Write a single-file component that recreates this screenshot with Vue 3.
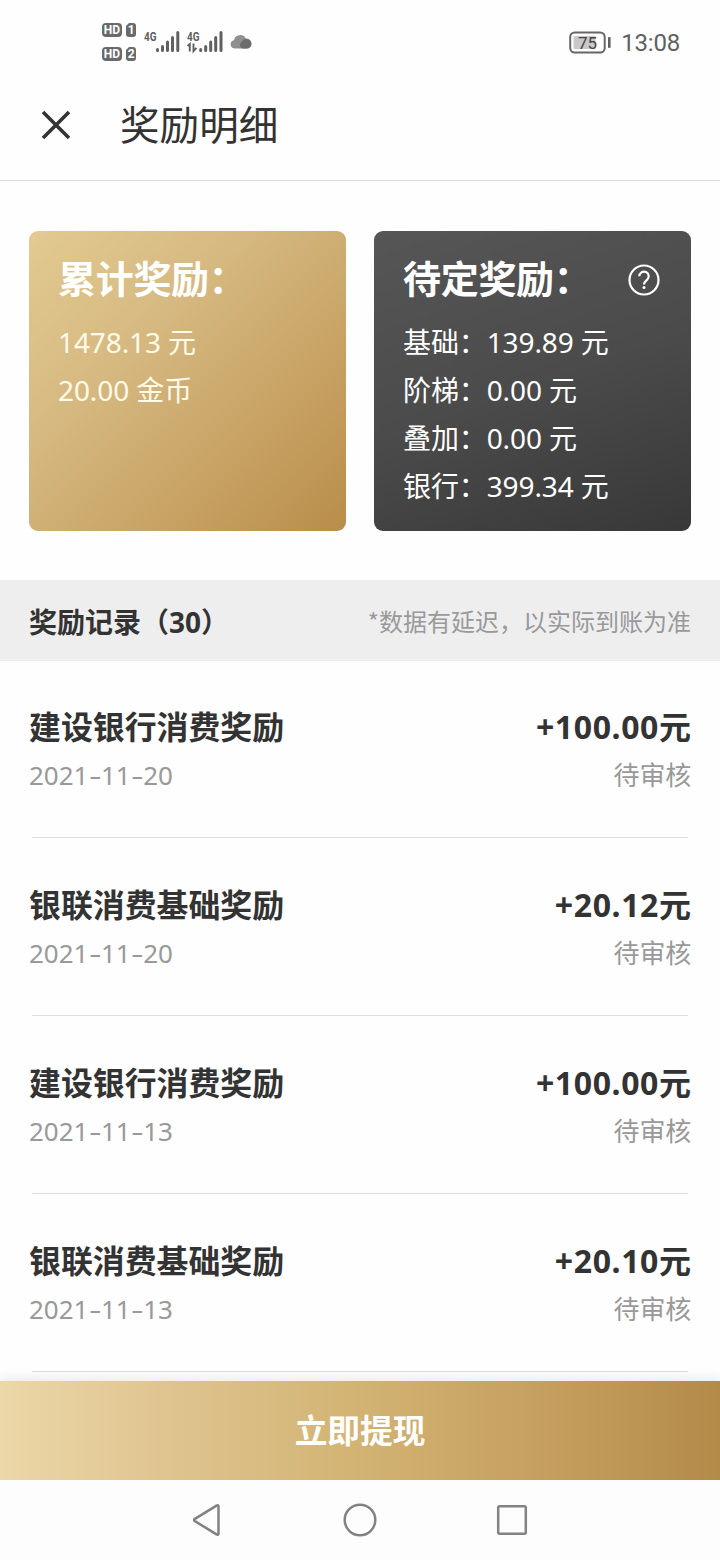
<script setup>
const pending = [
  { label: '基础', value: '139.89' },
  { label: '阶梯', value: '0.00' },
  { label: '叠加', value: '0.00' },
  { label: '银行', value: '399.34' },
]

const records = [
  { title: '建设银行消费奖励', date: '2021-11-20', amount: '+100.00', status: '待审核' },
  { title: '银联消费基础奖励', date: '2021-11-20', amount: '+20.12', status: '待审核' },
  { title: '建设银行消费奖励', date: '2021-11-13', amount: '+100.00', status: '待审核' },
  { title: '银联消费基础奖励', date: '2021-11-13', amount: '+20.10', status: '待审核' },
]
</script>

<template>
  <div class="screen">
    <div class="status">
      <div class="status-left">
        <svg class="hd" width="36" height="40" viewBox="0 0 36 40">
          <rect x="1" y="1" width="20" height="14" rx="4" fill="#6a6a6a" />
          <text x="11" y="12.2" text-anchor="middle" class="hd-text">HD</text>
          <path d="M28 1h4a3 3 0 0 1 3 3v8a3 3 0 0 1-3 3h-4a3 3 0 0 1-3-3V4z" fill="#6a6a6a" />
          <text x="30.3" y="12.2" text-anchor="middle" class="hd-text">1</text>
          <rect x="1" y="25" width="20" height="14" rx="4" fill="#6a6a6a" />
          <text x="11" y="36.2" text-anchor="middle" class="hd-text">HD</text>
          <path d="M28 25h4a3 3 0 0 1 3 3v8a3 3 0 0 1-3 3h-4a3 3 0 0 1-3-3v-8z" fill="#6a6a6a" />
          <text x="30.3" y="36.2" text-anchor="middle" class="hd-text">2</text>
        </svg>
        <svg class="signal" width="80" height="24" viewBox="0 0 80 24">
          <text x="0" y="10.5" class="net" textLength="12.5" lengthAdjust="spacingAndGlyphs">4G</text>
          <g stroke="#606060" stroke-width="3" stroke-linecap="round">
            <path d="M13.500 19.600v.8M18.500 16.500v4M23.500 12v8.500M28.500 7.500v13M33.800 2.500v18" />
            <path d="M56.700 19.600v.8M61.700 16.500v4M66.700 12v8.500M71.700 7.500v13M77 2.500v18" />
          </g>
          <text x="43" y="10.5" class="net" textLength="12.5" lengthAdjust="spacingAndGlyphs">4G</text>
          <path d="M43.500 16l2.300-2v7.500M49.500 13.500v7.500l3-3.200" fill="none" stroke="#606060" stroke-width="1.900" />
        </svg>
        <svg class="cloud" width="22" height="16" viewBox="0 0 22 16">
          <path d="M4.500 14.500a4.200 4.200 0 0 1-.5-8.300A6.300 6.300 0 0 1 15.800 4.500a5 5 0 0 1 1 10z" fill="#8f8f8f" />
          <path d="M12 14.500a4 4 0 0 1 0-7 5.200 5.200 0 0 1 9.500 2.200 5 5 0 0 1-4.800 4.800z" fill="#6c6c6c" />
        </svg>
      </div>
      <div class="status-right">
        <svg width="44" height="24" viewBox="0 0 44 24">
          <rect x="2.200" y="1.500" width="34.500" height="20" rx="4.500" fill="#fff" stroke="#666" stroke-width="2" />
          <rect x="5.500" y="5" width="22" height="13" rx="1" fill="#c9c9c9" />
          <text x="19.500" y="17.500" text-anchor="middle" class="battery-text">75</text>
          <rect x="40" y="6" width="2.600" height="11" rx="1" fill="#606060" />
        </svg>
        <span class="clock">13:08</span>
      </div>
    </div>

    <header class="header">
      <svg class="close" width="30" height="30" viewBox="0 0 30 30">
        <path d="M2 2l26 26M28 2L2 28" stroke="#333" stroke-width="3.600" fill="none" />
      </svg>
      <h1>奖励明细</h1>
    </header>

    <section class="cards">
      <div class="card gold">
        <h2>累计奖励：</h2>
        <p>1478.13 元</p>
        <p>20.00 金币</p>
      </div>
      <div class="card dark">
        <div class="card-head">
          <h2>待定奖励：</h2>
          <svg width="32" height="32" viewBox="0 0 32 32" fill="none" stroke="#fff">
            <circle cx="16" cy="16" r="14.500" stroke-width="2.200" />
            <path d="M11.300 12.300a4.700 4.700 0 1 1 7.700 3.600c-1.900 1.600-3 2.400-3 4.600" stroke-width="2.200" />
            <circle cx="16" cy="23.600" r="1.500" fill="#fff" stroke="none" />
          </svg>
        </div>
        <p v-for="p in pending" :key="p.label">{{ p.label }}：{{ p.value }} 元</p>
      </div>
    </section>

    <div class="bar">
      <span class="bar-title">奖励记录（30）</span>
      <span class="bar-note">*数据有延迟，以实际到账为准</span>
    </div>

    <ul class="list">
      <li v-for="(r, i) in records" :key="i">
        <div class="line">
          <span class="title">{{ r.title }}</span>
          <span><span class="amount">{{ r.amount }}</span>元</span>
        </div>
        <div class="line sub">
          <span class="date"><template v-for="(part, k) in r.date.split('-')" :key="k"><span v-if="k" class="dash">-</span>{{ part }}</template></span>
          <span class="state">{{ r.status }}</span>
        </div>
      </li>
    </ul>

    <button class="cta">立即提现</button>

    <nav class="nav">
      <svg width="34" height="34" viewBox="0 0 34 34"><path d="M27.500 3.200v27.600a1 1 0 0 1-1.600.8L3.500 17.900a1.100 1.100 0 0 1 0-1.800L25.900 2.400a1 1 0 0 1 1.600.8z" /></svg>
      <svg width="34" height="34" viewBox="0 0 34 34"><circle cx="17" cy="17" r="15.300" /></svg>
      <svg width="34" height="34" viewBox="0 0 34 34"><rect x="3.200" y="3.200" width="27.600" height="27.600" rx="1.500" /></svg>
    </nav>
  </div>
</template>

<style>
body {
  background: #fff;
}
</style>

<style scoped>
.screen {
  width: 720px;
  height: 1560px;
  overflow: hidden;
  display: flex;
  flex-direction: column;
  background: #fefefe;
  color: #333;
  font-family: 'Noto Sans', 'Noto Sans CJK SC', sans-serif;
}
h1, h2, p, ul { margin: 0; padding: 0; }
.status {
  height: 84px;
  flex: none;
  box-sizing: border-box;
  padding: 0 40px 0 101px;
  display: flex;
  justify-content: space-between;
  align-items: center;
}
.status-left, .status-right { display: flex; align-items: center; }
.signal { margin-left: 7px; }
.cloud { margin-left: 6px; }
.hd-text { font: bold 12px 'Roboto', sans-serif; fill: #fff; }
.net { font: bold 13px 'Roboto', sans-serif; fill: #606060; }
.battery-text { font: 17px 'Roboto', sans-serif; fill: #444; }
.status-right { padding-top: 1px; }
.clock {
  margin-left: 9px;
  font: 24px/30px 'Roboto', sans-serif;
  letter-spacing: -0.2px;
  color: #606060;
}
.header {
  height: 97px;
  flex: none;
  box-sizing: border-box;
  display: flex;
  align-items: center;
  padding: 0 0 14px 41px;
  border-bottom: 1px solid #dcdcdc;
}
.header h1 {
  margin-left: 49px;
  font-size: 39.600px;
  line-height: 56px;
  font-weight: 400;
}
.cards {
  display: flex;
  gap: 28px;
  padding: 50px 29px 49px;
}
.card {
  flex: 1;
  height: 300px;
  box-sizing: border-box;
  padding: 20px 30px 0 29px;
  border-radius: 9px;
  color: #fff;
}
.gold { background: linear-gradient(135deg, #e2ca90 0%, #d6b981 35%, #c8a365 68%, #b98d49 100%); }
.dark { background: linear-gradient(160deg, #565656, #4b4b4b 50%, #383838); }
.gold p { color: #fffbe9; }
.card h2 {
  font-size: 38px;
  line-height: 54px;
  font-weight: 700;
  letter-spacing: -0.3px;
  white-space: nowrap;
  margin-bottom: 13px;
}
.card-head { display: flex; justify-content: space-between; }
.card-head h2 { width: 200px; }
.card-head svg { margin-top: 13px; margin-right: 1px; flex: none; }
.card p {
  font-size: 28px;
  line-height: 48px;
  letter-spacing: -0.1px;
}
.bar {
  height: 81px;
  flex: none;
  box-sizing: border-box;
  padding: 0 29px;
  display: flex;
  justify-content: space-between;
  align-items: center;
  background: #eeeeef;
}
.bar-title { font-size: 28px; font-weight: 700; }
.bar-note { font-family: 'Noto Sans CJK SC', sans-serif; font-size: 24px; color: #999; }
.list {
  height: 720px;
  flex: none;
  overflow: hidden;
  list-style: none;
  padding: 0 29px;
}
.list li {
  height: 178px;
  box-sizing: border-box;
  padding-top: 42px;
  background: linear-gradient(#dedede, #dedede) 3px 176px / 656px 1px no-repeat;
}
.line {
  display: flex;
  justify-content: space-between;
  font-size: 32px;
  line-height: 48px;
  font-weight: 700;
}
.title { font-size: 31.900px; }
.amount { letter-spacing: 0.600px; }
.sub { font-size: 26px; font-weight: 400; color: #999; }
.state { letter-spacing: -0.2px; }
.dash {
  display: inline-block;
  width: 12.500px;
  text-align: center;
  transform: scaleX(1.500);
}
.cta {
  height: 99px;
  flex: none;
  border: 0;
  padding: 0 0 3px;
  color: #fff;
  font: 700 32.700px/48px 'Noto Sans CJK SC', sans-serif;
  background: linear-gradient(90deg, #ecd7a8 0%, #e0c591 22%, #d2b373 50%, #c49d5d 78%, #b38a48 100%);
  box-shadow: 0 -4px 10px rgba(0, 0, 0, 0.07);
}
.nav {
  height: 80px;
  display: flex;
  justify-content: center;
  align-items: center;
  gap: 118px;
  background: #fdfdfd;
}
.nav svg { fill: none; stroke: #828282; stroke-width: 2.500; }
</style>
